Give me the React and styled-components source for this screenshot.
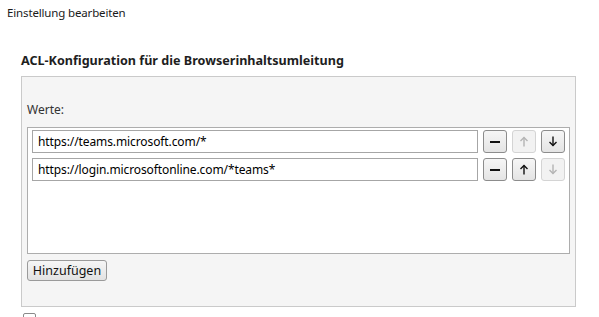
import styled, { createGlobalStyle } from 'styled-components';

const GlobalStyle = createGlobalStyle`
  html, body {
    margin: 0;
    background: #ffffff;
  }
  body {
    font-family: "Noto Sans", "Open Sans", sans-serif;
    color: #000000;
  }
`;

const Page = styled.div`
  width: 599px;
  height: 317px;
  overflow: hidden;
  padding: 5px 0 0 7px;
  box-sizing: border-box;
`;

const DialogTitle = styled.div`
  font-size: 11.5px;
  letter-spacing: -0.15px;
  line-height: 16px;
  color: #1a1a1a;
`;

const Section = styled.section`
  margin: 31px 0 0 14px;
  width: 555px;
`;

const SectionTitle = styled.h2`
  margin: 0 0 6px 0;
  font-size: 12.6px;
  line-height: 18px;
  font-weight: 700;
  color: #1e1e1e;
`;

const Panel = styled.div`
  border: 1px solid #cacaca;
  background: #f5f5f5;
  height: 231px;
  box-sizing: border-box;
  padding: 25px 5px 0 5px;
  display: flex;
  flex-direction: column;
`;

const Label = styled.div`
  font-size: 12px;
  line-height: 16px;
  color: #333333;
  margin-bottom: 9px;
`;

const ListBox = styled.div`
  height: 127px;
  box-sizing: border-box;
  border: 1px solid #adadad;
  background: #ffffff;
  padding: 2px 4px;
  display: flex;
  flex-direction: column;
  gap: 5px;
`;

const Row = styled.div`
  display: flex;
  align-items: center;
  gap: 5px;
`;

const Field = styled.div`
  width: 446px;
  height: 23px;
  box-sizing: border-box;
  border: 1px solid #a6a6a6;
  background: #ffffff;
  padding: 0 5px;
  font-size: 12px;
  letter-spacing: -0.1px;
  line-height: 21px;
  color: #000000;
  white-space: nowrap;
  overflow: hidden;
`;

const IconButton = styled.div`
  width: 24px;
  height: 23px;
  box-sizing: border-box;
  border-radius: 3px;
  border: 1px solid ${(p) => (p.$disabled ? '#d4d4d4' : '#8c8c8c')};
  background: ${(p) =>
    p.$disabled ? '#f2f2f2' : 'linear-gradient(#f6f6f6, #e4e4e4)'};
  color: ${(p) => (p.$disabled ? '#b4b4b4' : '#111111')};
  display: flex;
  align-items: center;
  justify-content: center;
`;

const AddButton = styled.button`
  margin-top: 6px;
  width: 80px;
  height: 21px;
  box-sizing: border-box;
  border: 1px solid #9a9a9a;
  border-radius: 3px;
  background: linear-gradient(#f6f6f6, #e2e2e2);
  font-family: inherit;
  font-size: 12.5px;
  color: #111111;
  padding: 0;
`;

const CheckBox = styled.div`
  margin: 6px 0 0 2px;
  width: 13px;
  height: 13px;
  box-sizing: border-box;
  border: 1px solid #8a8a8a;
  border-radius: 2px;
  background: #ffffff;
`;

const Minus = () => (
  <svg width="10" height="4" viewBox="0 0 10 4">
    <rect x="0" y="1" width="10" height="2" fill="currentColor" />
  </svg>
);

const Arrow = ({ down }) => (
  <svg width="10" height="11" viewBox="0 0 10 11">
    <g
      fill="none"
      stroke="currentColor"
      strokeWidth="1.4"
      transform={down ? 'rotate(180 5 5.5)' : undefined}
    >
      <path d="M5 1.5 V10.5" />
      <path d="M1.5 5 L5 1.5 L8.5 5" />
    </g>
  </svg>
);

const entries = [
  { url: 'https://teams.microsoft.com/*', first: true, last: false },
  { url: 'https://login.microsoftonline.com/*teams*', first: false, last: true },
];

const App = () => {
  return (
    <>
      <GlobalStyle />
      <Page>
        <DialogTitle>Einstellung bearbeiten</DialogTitle>
        <Section>
          <SectionTitle>ACL-Konfiguration für die Browserinhaltsumleitung</SectionTitle>
          <Panel>
            <Label>Werte:</Label>
            <ListBox>
              {entries.map((e) => (
                <Row key={e.url}>
                  <Field>{e.url}</Field>
                  <IconButton>
                    <Minus />
                  </IconButton>
                  <IconButton $disabled={e.first}>
                    <Arrow />
                  </IconButton>
                  <IconButton $disabled={e.last}>
                    <Arrow down />
                  </IconButton>
                </Row>
              ))}
            </ListBox>
            <div>
              <AddButton>Hinzufügen</AddButton>
            </div>
          </Panel>
          <CheckBox />
        </Section>
      </Page>
    </>
  );
};

export default App;
